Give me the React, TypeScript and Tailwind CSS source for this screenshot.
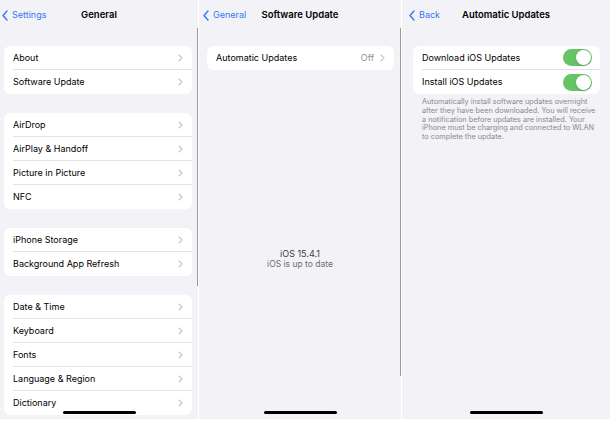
const font = "font-['Inter','Liberation_Sans',sans-serif]";

function Chevron() {
  return (
    <svg width="5" height="8" viewBox="0 0 5 8" className="shrink-0">
      <path d="M1 1l3 3-3 3" fill="none" stroke="#c5c5c9" strokeWidth="1.1" strokeLinecap="round" strokeLinejoin="round" />
    </svg>
  );
}

function BackChevron() {
  return (
    <svg width="6" height="11" viewBox="0 0 6 11" className="shrink-0">
      <path d="M5 1L1 5.5 5 10" fill="none" stroke="#3478f6" strokeWidth="1.4" strokeLinecap="round" strokeLinejoin="round" />
    </svg>
  );
}

function NavBar({ back, title, pad }: { back: string; title: string; pad: string }) {
  return (
    <div className={`grid h-[29px] grid-cols-[1fr_auto_1fr] items-center pt-px ${pad}`}>
      <div className="flex items-center gap-[4px] text-[9px] text-[#3478f6]">
        <BackChevron />
        <span>{back}</span>
      </div>
      <p className="text-[9.5px] font-semibold text-black">{title}</p>
      <div />
    </div>
  );
}

function Row({ label, last, value }: { label: string; last?: boolean; value?: string }) {
  return (
    <div className="flex h-[24px] items-center pl-[9px]">
      <div className={`flex h-full flex-1 items-center justify-between pr-[9px] ${last ? "" : "border-b border-[#e3e3e7]"}`}>
        <span className="text-[9px] text-black">{label}</span>
        <span className="flex items-center gap-[6px]">
          {value ? <span className="text-[9px] text-[#8e8e93]">{value}</span> : null}
          <Chevron />
        </span>
      </div>
    </div>
  );
}

function Group({ items }: { items: string[] }) {
  return (
    <div className="rounded-[6px] bg-white">
      {items.map((item, i) => (
        <Row key={item} label={item} last={i === items.length - 1} />
      ))}
    </div>
  );
}

function Toggle() {
  return (
    <div className="flex h-[17px] w-[29px] items-center justify-end rounded-full bg-[#65c466] px-[1px]">
      <div className="h-[15px] w-[15px] rounded-full bg-white shadow-[0_1px_2px_rgba(0,0,0,0.2)]" />
    </div>
  );
}

function ToggleRow({ label, last }: { label: string; last?: boolean }) {
  return (
    <div className="flex h-[24px] items-center pl-[9px]">
      <div className={`flex h-full flex-1 items-center justify-between pr-[8px] ${last ? "" : "border-b border-[#e3e3e7]"}`}>
        <span className="text-[9px] text-black">{label}</span>
        <Toggle />
      </div>
    </div>
  );
}

function HomeBar() {
  return <div className="mx-auto h-[3px] w-[73px] rounded-full bg-black" />;
}

const footer = [
  "Automatically install software updates overnight",
  "after they have been downloaded. You will receive",
  "a notification before updates are installed. Your",
  "iPhone must be charging and connected to WLAN",
  "to complete the update.",
];

export default function App() {
  return (
    <div className={`flex h-[425px] w-[610px] gap-px overflow-hidden bg-white ${font}`}>
      <section className="relative flex h-[419px] w-[198px] flex-col overflow-hidden bg-[#f2f2f7]">
        <NavBar back="Settings" title="General" pad="pl-[2px] pr-[2px]" />
        <div className="mt-[17px] flex flex-col gap-[19px] pl-[4px] pr-[6px]">
          <Group items={["About", "Software Update"]} />
          <Group items={["AirDrop", "AirPlay & Handoff", "Picture in Picture", "NFC"]} />
          <Group items={["iPhone Storage", "Background App Refresh"]} />
          <Group items={["Date & Time", "Keyboard", "Fonts", "Language & Region", "Dictionary"]} />
        </div>
        <div className="absolute bottom-[5px] left-0 right-0">
          <HomeBar />
        </div>
        <div className="absolute right-0 top-[28px] h-[258px] w-px bg-[#98989d]" />
      </section>

      <section className="relative flex h-[419px] w-[202px] flex-col bg-[#f2f2f7]">
        <NavBar back="General" title="Software Update" pad="pl-[4px] pr-[4px]" />
        <div className="mt-[17px] pl-[8px] pr-[7px]">
          <div className="rounded-[6px] bg-white">
            <Row label="Automatic Updates" value="Off" last />
          </div>
        </div>
        <div className="mt-[179px] flex flex-col items-center leading-[10px]">
          <p className="text-[9px] text-[#3c3c43]">iOS 15.4.1</p>
          <p className="text-[8.5px] text-[#6e6e73]">iOS is up to date</p>
        </div>
        <div className="absolute bottom-[5px] left-0 right-0">
          <HomeBar />
        </div>
        <div className="absolute right-0 top-[28px] h-[348px] w-[1.5px] bg-[#98989d]" />
      </section>

      <section className="relative flex h-[419px] flex-1 flex-col bg-[#f2f2f7]">
        <NavBar back="Back" title="Automatic Updates" pad="pl-[7px] pr-[7px]" />
        <div className="mt-[17px] pl-[11px] pr-[10px]">
          <div className="rounded-[6px] bg-white">
            <ToggleRow label="Download iOS Updates" />
            <ToggleRow label="Install iOS Updates" last />
          </div>
          <div className="mt-[4px] flex flex-col pl-[9px] text-[7.3px] leading-[8.8px] text-[#8a8a8e]">
            {footer.map((line) => (
              <p key={line} className="whitespace-nowrap">{line}</p>
            ))}
          </div>
        </div>
        <div className="absolute bottom-[5px] left-0 right-0">
          <HomeBar />
        </div>
      </section>
    </div>
  );
}
